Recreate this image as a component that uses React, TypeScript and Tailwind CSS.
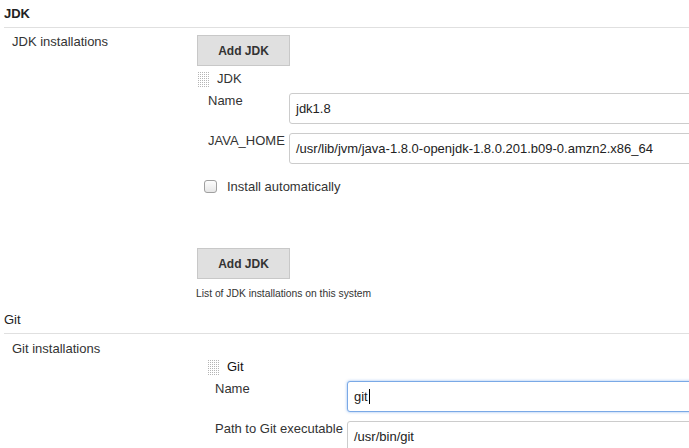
import React from "react";

function Grip() {
  const dots: React.ReactNode[] = [];
  for (let r = 0; r < 8; r++) {
    for (let c = 0; c < 6; c++) {
      dots.push(<rect key={`${r}-${c}`} x={c * 2} y={r * 2} width={1} height={1} fill="#b5b5b5" />);
    }
  }
  return (
    <svg width="11" height="16" viewBox="0 0 11 16" className="shrink-0">
      {dots}
    </svg>
  );
}

function Field({ value, focused }: { value: string; focused?: boolean }) {
  return (
    <div
      className={
        "flex-1 h-[31px] rounded-[3px] border bg-white flex items-center px-[6px] text-[13px] text-[#222] " +
        (focused ? "border-[#7aa9e6] shadow-[0_0_3px_rgba(102,160,233,0.7)]" : "border-[#cccccc]")
      }
    >
      <span>{value}</span>
      {focused && <span className="inline-block w-px h-[15px] bg-black ml-px" />}
    </div>
  );
}

function AddButton() {
  return (
    <div className="w-[93px] h-[31px] bg-[#e0e0e0] border border-[#c8c8c8] flex items-center justify-center text-[12px] font-bold text-[#333]">
      Add JDK
    </div>
  );
}

export default function App() {
  return (
    <div className="w-[689px] h-[448px] overflow-hidden bg-white text-[13px] leading-[16px] text-[#333] font-['Liberation_Sans',Arial,sans-serif]">
      <div className="w-[740px]">
        {/* JDK section */}
        <div className="mx-[4px] h-[28px] pt-[6px] border-b border-[#e0e0e0] font-bold text-[#222]">JDK</div>
        <div className="flex pl-[12px]">
          <div className="w-[185px] mt-[6px]">JDK installations</div>
          <div className="flex-1 flex flex-col mt-[7px]">
            <AddButton />
            <div className="flex items-start mt-[6px] ml-[1px] h-[19px]">
              <Grip />
              <span className="ml-[8px] mt-[-1px]">JDK</span>
            </div>
            <div className="flex items-start pl-[11px] mt-[2px]">
              <div className="w-[81px]">Name</div>
              <Field value="jdk1.8" />
            </div>
            <div className="flex items-start pl-[11px] mt-[9px]">
              <div className="w-[81px]">JAVA_HOME</div>
              <Field value="/usr/lib/jvm/java-1.8.0-openjdk-1.8.0.201.b09-0.amzn2.x86_64" />
            </div>
            <div className="flex items-center mt-[16px] pl-[7px] h-[13px]">
              <div className="w-[13px] h-[13px] rounded-[3px] border border-[#a0a0a0] bg-gradient-to-b from-[#fdfdfd] to-[#e6e6e6]" />
              <span className="ml-[10px]">Install automatically</span>
            </div>
            <div className="mt-[55px]">
              <AddButton />
            </div>
            <div className="mt-[9px] ml-[-1px] text-[10.3px] leading-[12px] text-[#333]">List of JDK installations on this system</div>
          </div>
        </div>

        {/* Git section */}
        <div className="mt-[6px] mx-[4px] h-[28px] pt-[6px] border-b border-[#e0e0e0] text-[#222]">Git</div>
        <div className="flex pl-[12px]">
          <div className="w-[195px] mt-[7px]">Git installations</div>
          <div className="flex-1 flex flex-col">
            <div className="flex items-start mt-[26px] ml-[1px] h-[19px]">
              <Grip />
              <span className="ml-[8px] mt-[-1px] text-[#111]">Git</span>
            </div>
            <div className="flex items-start pl-[8px] mt-[2px]">
              <div className="w-[132px]">Name</div>
              <Field value="git" focused />
            </div>
            <div className="flex items-start pl-[8px] mt-[9px]">
              <div className="w-[132px]">Path to Git executable</div>
              <Field value="/usr/bin/git" />
            </div>
          </div>
        </div>
      </div>
    </div>
  );
}
